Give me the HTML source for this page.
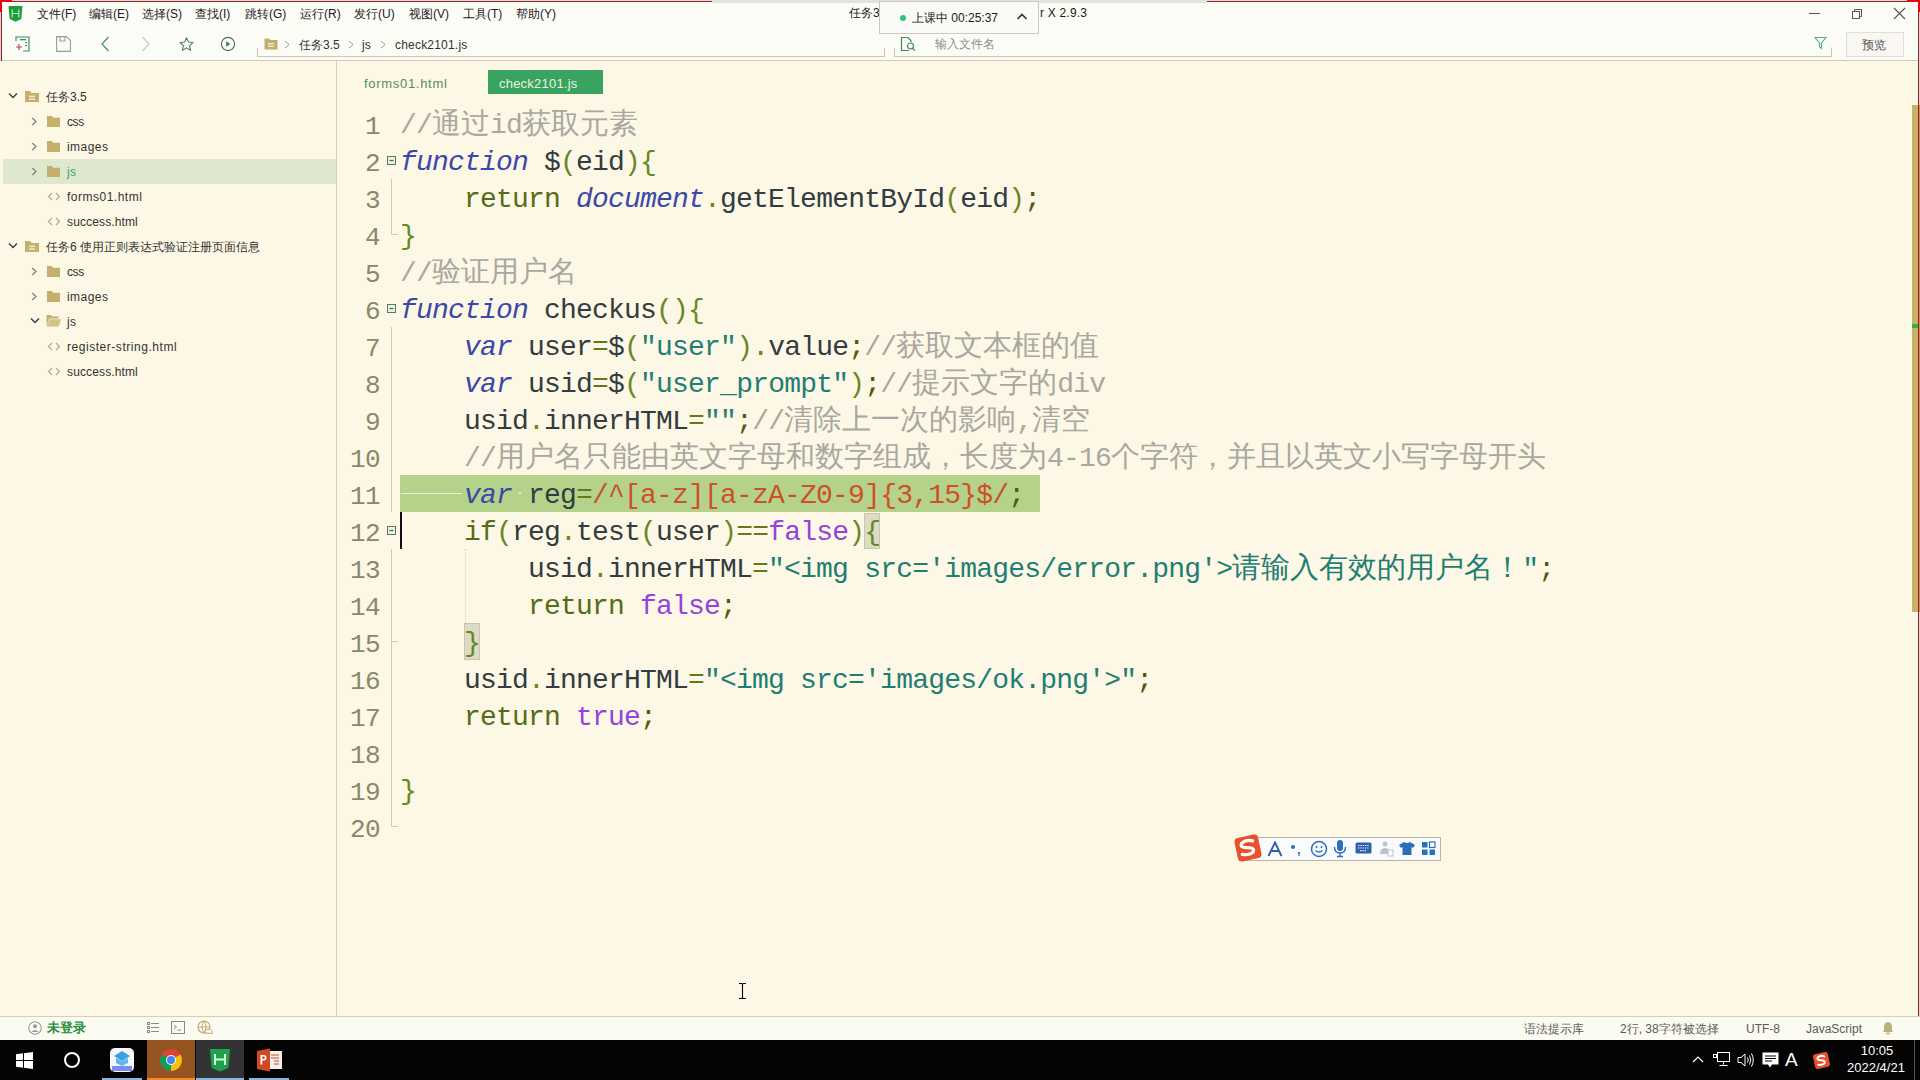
<!DOCTYPE html>
<html><head><meta charset="utf-8">
<style>
html,body{margin:0;padding:0}
body{width:1920px;height:1080px;overflow:hidden;position:relative;background:#FDF7E5;font-family:"Liberation Sans",sans-serif}
.abs{position:absolute}
#title{position:absolute;left:0;top:0;width:1920px;height:60px;background:#FCFCF7}
#tbline{position:absolute;left:0;top:60px;width:1920px;height:1px;background:#CFCBB5}
#side{position:absolute;left:0;top:61px;width:336px;height:955px;background:#FDF7E5}
#sep{position:absolute;left:336px;top:61px;width:1px;height:955px;background:#D9D3BD}
#status{position:absolute;left:0;top:1016px;width:1920px;height:24px;background:#FCFBF1;border-top:1px solid #D3CFBA;box-sizing:border-box}
#task{position:absolute;left:0;top:1040px;width:1920px;height:40px;background:#040404}
.mi{position:absolute;top:6px;font-size:12px;color:#1a1a1a;white-space:nowrap;line-height:17px}
.ln{position:absolute;left:330px;margin-top:4px;width:50px;text-align:right;height:37px;line-height:37px;font-family:"Liberation Mono",monospace;font-size:26px;letter-spacing:-0.6px;color:#8A876C}
.cl{position:absolute;left:400px;margin-top:2px;height:37px;line-height:37px;white-space:pre;font-family:"Liberation Mono",monospace;font-size:28px;letter-spacing:-0.8px;color:#333C40}
.cj{font-size:29px;letter-spacing:0;font-weight:300}
.cm{color:#A8A8A0}
.kw{color:#3B48A8;font-style:italic}
.rt{color:#556C18}
.id{color:#333C40}
.pu{color:#648A22}
.sc{color:#4E5A10}
.op{color:#667818}
.st{color:#1F7E74}
.bo{color:#9444DC}
.rx{color:#CC5028}
.br{color:#648A22}
.chev{position:absolute}
.ico{position:absolute}
.fico{position:absolute;font-size:12px;color:#A09A80;letter-spacing:1px;line-height:18px}
.tt{position:absolute;font-size:12px;line-height:25px;white-space:nowrap}
.sb{position:absolute;top:1021px;font-size:12px;color:#5A5A5A;line-height:16px;white-space:nowrap}
</style></head><body>
<div id="title"></div>
<div id="tbline"></div>
<!-- red window border -->
<div class="abs" style="left:0;top:0;width:1920px;height:1px;background:#F6CFCF"></div>
<div class="abs" style="left:0;top:1px;width:1920px;height:1px;background:#7A3030"></div>
<div class="abs" style="left:0;top:0;width:1px;height:1040px;background:#F6C8C8"></div>
<div class="abs" style="left:1px;top:0;width:1px;height:1040px;background:#7A2C2C"></div>
<div class="abs" style="left:1918px;top:0;width:1px;height:1040px;background:#74302C"></div>
<div class="abs" style="left:1919px;top:0;width:1px;height:1040px;background:#F6C8C8"></div>
<div class="abs" style="left:1919px;top:105px;width:1px;height:507px;background:#F0804A"></div>
<div class="abs" style="left:0;top:0;width:12px;height:2px;background:#F00010"></div>
<div class="abs" style="left:0;top:0;width:2px;height:12px;background:#F00010"></div>
<div class="abs" style="left:0;top:1029px;width:2px;height:11px;background:#F00010"></div>
<div class="abs" style="left:1907px;top:0;width:13px;height:2px;background:#F00010"></div>
<div class="abs" style="left:1918px;top:0;width:2px;height:12px;background:#F00010"></div>
<div class="abs" style="left:712px;top:0;width:495px;height:3px;background:#E4E2DC"></div>

<!-- logo -->
<svg class="abs" style="left:8px;top:6px" width="15" height="16" viewBox="0 0 15 16"><path d="M0.5 0 H14.5 L13.3 13 L7.5 15.8 L1.7 13 Z" fill="#1E9C3C"/><path d="M4.2 3.5 V11.5 M10.8 3.5 V11.5 M4.2 7.5 H10.8" stroke="#BFF5C8" stroke-width="1.1" fill="none"/></svg>
<div class="mi" style="left:37px">文件(F)</div>
<div class="mi" style="left:89px">编辑(E)</div>
<div class="mi" style="left:142px">选择(S)</div>
<div class="mi" style="left:195px">查找(I)</div>
<div class="mi" style="left:245px">跳转(G)</div>
<div class="mi" style="left:300px">运行(R)</div>
<div class="mi" style="left:354px">发行(U)</div>
<div class="mi" style="left:409px">视图(V)</div>
<div class="mi" style="left:463px">工具(T)</div>
<div class="mi" style="left:516px">帮助(Y)</div>

<!-- title center -->
<div class="abs" style="left:849px;top:5px;font-size:12px;color:#1a1a1a;line-height:17px">任务3</div>
<div class="abs" style="left:879px;top:1px;width:160px;height:33px;background:#FAFAF7;border:1px solid #C9C9C6;box-sizing:border-box"></div>
<div class="abs" style="left:900px;top:15px;width:6px;height:6px;border-radius:3px;background:#33C47A"></div>
<div class="abs" style="left:912px;top:10px;font-size:12px;color:#1a1a1a;line-height:16px">上课中 00:25:37</div>
<svg class="abs" style="left:1016px;top:12px" width="12" height="10" viewBox="0 0 12 10"><path d="M1.5 7 L6 2.5 L10.5 7" stroke="#333" stroke-width="1.6" fill="none"/></svg>
<div class="abs" style="left:1040px;top:5px;font-size:12px;letter-spacing:0.2px;color:#1a1a1a;line-height:17px">r X 2.9.3</div>

<!-- window controls -->
<div class="abs" style="left:1809px;top:13px;width:11px;height:1px;background:#555"></div>
<svg class="abs" style="left:1851px;top:8px" width="12" height="12" viewBox="0 0 12 12"><rect x="1.5" y="3.5" width="7" height="7" fill="none" stroke="#555"/><path d="M3.5 3.5 V1.5 H10.5 V8.5 H8.5" fill="none" stroke="#555"/></svg>
<svg class="abs" style="left:1893px;top:7px" width="13" height="13" viewBox="0 0 13 13"><path d="M1 1 L12 12 M12 1 L1 12" stroke="#555" stroke-width="1.1"/></svg>

<!-- toolbar icons -->
<svg class="abs" style="left:15px;top:36px" width="16" height="16" viewBox="0 0 16 16"><path d="M1 5 V1 H14 V15 H8" fill="none" stroke="#3C8C64" stroke-width="1.2"/><rect x="5" y="3" width="6" height="1.3" fill="#3C8C64"/><rect x="10" y="6" width="2" height="1.2" fill="#3C8C64"/><rect x="10" y="9" width="2" height="1.2" fill="#3C8C64"/><path d="M4 8 V14 M1 11 H7" stroke="#B0524A" stroke-width="1.2"/></svg>
<svg class="abs" style="left:56px;top:36px" width="15" height="16" viewBox="0 0 15 16"><path d="M0.6 0.6 H10.5 L14.4 4.5 V15.4 H0.6 Z" fill="none" stroke="#9A9A9A" stroke-width="1.1"/><path d="M4 0.6 V5 H9 V0.6" fill="none" stroke="#9A9A9A" stroke-width="1.1"/></svg>
<svg class="abs" style="left:100px;top:36px" width="10" height="16" viewBox="0 0 10 16"><path d="M8.5 1 L2 8 L8.5 15" fill="none" stroke="#4A8870" stroke-width="1.15"/></svg>
<svg class="abs" style="left:141px;top:36px" width="10" height="16" viewBox="0 0 10 16"><path d="M1.5 1 L8 8 L1.5 15" fill="none" stroke="#C4CCC4" stroke-width="1.15"/></svg>
<svg class="abs" style="left:179px;top:37px" width="16" height="15" viewBox="0 0 16 15"><path d="M7.5 0.8 L9.4 5 L14 5.5 L10.6 8.6 L11.6 13.3 L7.5 10.9 L3.4 13.3 L4.4 8.6 L1 5.5 L5.6 5 Z" fill="none" stroke="#52806C" stroke-width="1.1" stroke-linejoin="round"/></svg>
<svg class="abs" style="left:220px;top:36px" width="16" height="16" viewBox="0 0 16 16"><circle cx="8" cy="8" r="6.6" fill="none" stroke="#476E5E" stroke-width="1.1"/><path d="M6.2 5.3 L10.2 8 L6.2 10.7 Z" fill="#2F7A5A"/></svg>
<div class="abs" style="left:257px;top:48px;width:1px;height:9px;background:#CCC8B4"></div>
<div class="abs" style="left:257px;top:56px;width:628px;height:1px;background:#CCC8B4"></div><div class="abs" style="left:884px;top:48px;width:1px;height:9px;background:#CCC8B4"></div>
<svg class="abs" style="left:264px;top:38px" width="14" height="12" viewBox="0 0 14 12"><path d="M0.5 0.5 H5 L6.5 2 H13.5 V11.5 H0.5 Z" fill="#C2AE6E"/><rect x="4" y="5" width="6" height="1.3" fill="#F6EFD8"/><rect x="4" y="7.5" width="6" height="1.3" fill="#F6EFD8"/></svg>
<svg class="abs" style="left:284px;top:40px" width="6" height="9" viewBox="0 0 6 9"><path d="M1 1 L5 4.5 L1 8" fill="none" stroke="#999" stroke-width="1"/></svg>
<div class="abs" style="left:299px;top:37px;font-size:12px;color:#333;line-height:17px">任务3.5</div>
<svg class="abs" style="left:348px;top:40px" width="6" height="9" viewBox="0 0 6 9"><path d="M1 1 L5 4.5 L1 8" fill="none" stroke="#999" stroke-width="1"/></svg>
<div class="abs" style="left:362px;top:37px;font-size:12px;color:#333;line-height:17px">js</div>
<svg class="abs" style="left:380px;top:40px" width="6" height="9" viewBox="0 0 6 9"><path d="M1 1 L5 4.5 L1 8" fill="none" stroke="#999" stroke-width="1"/></svg>
<div class="abs" style="left:395px;top:37px;font-size:12px;letter-spacing:0.2px;color:#333;line-height:17px">check2101.js</div>
<div class="abs" style="left:894px;top:48px;width:1px;height:9px;background:#CCC8B4"></div>
<div class="abs" style="left:894px;top:56px;width:938px;height:1px;background:#CCC8B4"></div>
<div class="abs" style="left:1831px;top:48px;width:1px;height:9px;background:#CCC8B4"></div>
<svg class="abs" style="left:900px;top:36px" width="17" height="16" viewBox="0 0 17 16"><path d="M9 14.5 H1.5 V1.5 H8 L11 4.5 V6" fill="none" stroke="#3A8A60" stroke-width="1.2"/><circle cx="10.5" cy="10" r="3" fill="none" stroke="#3A8A60" stroke-width="1.2"/><path d="M12.6 12.2 L15 14.6" stroke="#3A8A60" stroke-width="1.3"/></svg>
<div class="abs" style="left:935px;top:36px;font-size:12px;color:#8C8C8C;line-height:17px">输入文件名</div>
<svg class="abs" style="left:1814px;top:36px" width="13" height="14" viewBox="0 0 13 14"><path d="M1 1.5 H12 L7.5 7 V12.5 L5.5 11 V7 Z" fill="none" stroke="#5AAE8A" stroke-width="1.1"/></svg>
<div class="abs" style="left:1846px;top:32px;width:58px;height:25px;border:1px solid #E0DED6;background:#F8F7F2;box-sizing:border-box"></div>
<div class="abs" style="left:1862px;top:37px;font-size:12px;color:#555;line-height:16px">预览</div>

<div id="side"></div>
<div id="sep"></div>
<svg class="chev" style="left:8px;top:92px" width="10" height="8" viewBox="0 0 10 8"><path d="M1 1.5 L5 5.5 L9 1.5" fill="none" stroke="#3f3f3f" stroke-width="1.5"/></svg>
<svg class="ico" style="left:25px;top:91px" width="14" height="12" viewBox="0 0 14 12"><path d="M0 0 H5 L6.5 2 H14 V11 H0 Z" fill="#C4AF6C"/><rect x="4" y="4.6" width="6" height="1.5" fill="#F4ECD0"/><rect x="4" y="7.4" width="6" height="1.5" fill="#F4ECD0"/></svg>
<div class="tt" style="left:46px;top:85px;color:#333;letter-spacing:0px">任务3.5</div>
<svg class="chev" style="left:31px;top:117px" width="7" height="9" viewBox="0 0 7 9"><path d="M1.3 1 L5 4.5 L1.3 8" fill="none" stroke="#808076" stroke-width="1.25"/></svg>
<svg class="ico" style="left:47px;top:116px" width="13" height="11" viewBox="0 0 13 11"><path d="M0 0 H5 L6 1.8 H13 V11 H0 Z" fill="#C4AF6C"/></svg>
<div class="tt" style="left:67px;top:110px;color:#333;letter-spacing:-0.4px">css</div>
<svg class="chev" style="left:31px;top:142px" width="7" height="9" viewBox="0 0 7 9"><path d="M1.3 1 L5 4.5 L1.3 8" fill="none" stroke="#808076" stroke-width="1.25"/></svg>
<svg class="ico" style="left:47px;top:141px" width="13" height="11" viewBox="0 0 13 11"><path d="M0 0 H5 L6 1.8 H13 V11 H0 Z" fill="#C4AF6C"/></svg>
<div class="tt" style="left:67px;top:135px;color:#333;letter-spacing:0.45px">images</div>
<div style="position:absolute;left:3px;top:159px;width:333px;height:25px;background:#DEE8CE"></div>
<svg class="chev" style="left:31px;top:167px" width="7" height="9" viewBox="0 0 7 9"><path d="M1.3 1 L5 4.5 L1.3 8" fill="none" stroke="#808076" stroke-width="1.25"/></svg>
<svg class="ico" style="left:47px;top:166px" width="13" height="11" viewBox="0 0 13 11"><path d="M0 0 H5 L6 1.8 H13 V11 H0 Z" fill="#C4AF6C"/></svg>
<div class="tt" style="left:67px;top:160px;color:#3AA56A;letter-spacing:0.3px">js</div>
<svg class="ico" style="left:47px;top:192px" width="14" height="9" viewBox="0 0 14 9"><path d="M5 1 L1.5 4.5 L5 8 M9 1 L12.5 4.5 L9 8" fill="none" stroke="#B3AC90" stroke-width="1.3"/></svg>
<div class="tt" style="left:67px;top:185px;color:#333;letter-spacing:0.5px">forms01.html</div>
<svg class="ico" style="left:47px;top:217px" width="14" height="9" viewBox="0 0 14 9"><path d="M5 1 L1.5 4.5 L5 8 M9 1 L12.5 4.5 L9 8" fill="none" stroke="#B3AC90" stroke-width="1.3"/></svg>
<div class="tt" style="left:67px;top:210px;color:#333;letter-spacing:0.13px">success.html</div>
<svg class="chev" style="left:8px;top:242px" width="10" height="8" viewBox="0 0 10 8"><path d="M1 1.5 L5 5.5 L9 1.5" fill="none" stroke="#3f3f3f" stroke-width="1.5"/></svg>
<svg class="ico" style="left:25px;top:241px" width="14" height="12" viewBox="0 0 14 12"><path d="M0 0 H5 L6.5 2 H14 V11 H0 Z" fill="#C4AF6C"/><rect x="4" y="4.6" width="6" height="1.5" fill="#F4ECD0"/><rect x="4" y="7.4" width="6" height="1.5" fill="#F4ECD0"/></svg>
<div class="tt" style="left:46px;top:235px;color:#333;letter-spacing:0px">任务6 使用正则表达式验证注册页面信息</div>
<svg class="chev" style="left:31px;top:267px" width="7" height="9" viewBox="0 0 7 9"><path d="M1.3 1 L5 4.5 L1.3 8" fill="none" stroke="#808076" stroke-width="1.25"/></svg>
<svg class="ico" style="left:47px;top:266px" width="13" height="11" viewBox="0 0 13 11"><path d="M0 0 H5 L6 1.8 H13 V11 H0 Z" fill="#C4AF6C"/></svg>
<div class="tt" style="left:67px;top:260px;color:#333;letter-spacing:-0.4px">css</div>
<svg class="chev" style="left:31px;top:292px" width="7" height="9" viewBox="0 0 7 9"><path d="M1.3 1 L5 4.5 L1.3 8" fill="none" stroke="#808076" stroke-width="1.25"/></svg>
<svg class="ico" style="left:47px;top:291px" width="13" height="11" viewBox="0 0 13 11"><path d="M0 0 H5 L6 1.8 H13 V11 H0 Z" fill="#C4AF6C"/></svg>
<div class="tt" style="left:67px;top:285px;color:#333;letter-spacing:0.45px">images</div>
<svg class="chev" style="left:30px;top:317px" width="10" height="8" viewBox="0 0 10 8"><path d="M1 1.5 L5 5.5 L9 1.5" fill="none" stroke="#3f3f3f" stroke-width="1.5"/></svg>
<svg class="ico" style="left:46px;top:315px" width="15" height="12" viewBox="0 0 15 12"><path d="M0.5 0 H5 L6 1.6 H12.5 V3.5 H3 L0.5 11 Z" fill="#C4AF6C"/><path d="M3.2 4.2 H15 L12.6 11.5 H0.6 Z" fill="#D3C28A"/></svg>
<div class="tt" style="left:67px;top:310px;color:#333;letter-spacing:0.3px">js</div>
<svg class="ico" style="left:47px;top:342px" width="14" height="9" viewBox="0 0 14 9"><path d="M5 1 L1.5 4.5 L5 8 M9 1 L12.5 4.5 L9 8" fill="none" stroke="#B3AC90" stroke-width="1.3"/></svg>
<div class="tt" style="left:67px;top:335px;color:#333;letter-spacing:0.54px">register-string.html</div>
<svg class="ico" style="left:47px;top:367px" width="14" height="9" viewBox="0 0 14 9"><path d="M5 1 L1.5 4.5 L5 8 M9 1 L12.5 4.5 L9 8" fill="none" stroke="#B3AC90" stroke-width="1.3"/></svg>
<div class="tt" style="left:67px;top:360px;color:#333;letter-spacing:0.13px">success.html</div>

<!-- tabs -->
<div class="abs" style="left:364px;top:75px;font-size:13px;letter-spacing:0.7px;color:#5A8C64;line-height:18px">forms01.html</div>
<div class="abs" style="left:488px;top:70px;width:115px;height:24px;background:#3AA35F"></div>
<div class="abs" style="left:499px;top:75px;font-size:13px;letter-spacing:0.22px;color:#E2F7E0;line-height:18px">check2101.js</div>

<!-- bracket match boxes -->
<div class="abs" style="left:864px;top:513px;width:16px;height:36px;background:#DDDBC6;box-shadow:inset 0 0 0 1px #C9C6B0"></div>
<div class="abs" style="left:464px;top:623px;width:16px;height:37px;background:#DDDBC6;box-shadow:inset 0 0 0 1px #C9C6B0"></div>
<!-- line highlight -->
<div class="abs" style="left:400px;top:475px;width:640px;height:37px;background:#B5D28A"></div>
<div class="abs" style="left:401px;top:493px;width:61px;height:1px;background:#E6F2D2"></div><div class="abs" style="left:519px;top:492px;width:2px;height:2px;background:#E6F2D2"></div>

<!-- gutter fold marks and guides -->
<svg class="abs" style="left:380px;top:100px" width="30" height="900" viewBox="0 0 30 900">
 <g stroke="#CFCAB6" stroke-width="1" fill="none">
  <path d="M11.5 79 V134.5 H18"/>
  <path d="M11.5 227 V412"/>
  <path d="M11.5 449 V726.5 H18"/>
  <path d="M11.5 541.5 H18"/>
 </g>
 <g fill="#E6F4E2" stroke="#5F735F" stroke-width="1">
  <rect x="7.5" y="56.5" width="8" height="8"/>
  <rect x="7.5" y="204.5" width="8" height="8"/>
  <rect x="7.5" y="426.5" width="8" height="8"/>
 </g>
 <g stroke="#4F634F" stroke-width="1.2">
  <path d="M9.5 60.5 H13.5"/><path d="M9.5 208.5 H13.5"/><path d="M9.5 430.5 H13.5"/>
 </g>
</svg>
<div class="abs" style="left:465px;top:549px;width:0;height:74px;border-left:1px dotted #D8D2BC"></div>
<div class="abs" style="left:400px;top:512px;width:2px;height:37px;background:#111"></div>

<div class="ln" style="top:105px">1</div>
<div class="cl" style="top:105px"><span class="cm">//<span class="cj">通过</span>id<span class="cj">获取元素</span></span></div>
<div class="ln" style="top:142px">2</div>
<div class="cl" style="top:142px"><span class="kw">function</span> <span class="id">$</span><span class="pu">(</span><span class="id">eid</span><span class="pu">)</span><span class="pu">{</span></div>
<div class="ln" style="top:179px">3</div>
<div class="cl" style="top:179px">    <span class="rt">return</span> <span class="kw">document</span><span class="pu">.</span><span class="id">getElementById</span><span class="pu">(</span><span class="id">eid</span><span class="pu">)</span><span class="sc">;</span></div>
<div class="ln" style="top:216px">4</div>
<div class="cl" style="top:216px"><span class="pu">}</span></div>
<div class="ln" style="top:253px">5</div>
<div class="cl" style="top:253px"><span class="cm">//<span class="cj">验证用户名</span></span></div>
<div class="ln" style="top:290px">6</div>
<div class="cl" style="top:290px"><span class="kw">function</span> <span class="id">checkus</span><span class="pu">(</span><span class="pu">)</span><span class="pu">{</span></div>
<div class="ln" style="top:327px">7</div>
<div class="cl" style="top:327px">    <span class="kw">var</span> <span class="id">user</span><span class="op">=</span><span class="id">$</span><span class="pu">(</span><span class="st">"user"</span><span class="pu">)</span><span class="pu">.</span><span class="id">value</span><span class="sc">;</span><span class="cm">//<span class="cj">获取文本框的值</span></span></div>
<div class="ln" style="top:364px">8</div>
<div class="cl" style="top:364px">    <span class="kw">var</span> <span class="id">usid</span><span class="op">=</span><span class="id">$</span><span class="pu">(</span><span class="st">"user_prompt"</span><span class="pu">)</span><span class="sc">;</span><span class="cm">//<span class="cj">提示文字的</span>div</span></div>
<div class="ln" style="top:401px">9</div>
<div class="cl" style="top:401px">    <span class="id">usid</span><span class="pu">.</span><span class="id">innerHTML</span><span class="op">=</span><span class="st">""</span><span class="sc">;</span><span class="cm">//<span class="cj">清除上一次的影响</span>,<span class="cj">清空</span></span></div>
<div class="ln" style="top:438px">10</div>
<div class="cl" style="top:438px">    <span class="cm">//<span class="cj">用户名只能由英文字母和数字组成，长度为</span>4-16<span class="cj">个字符，并且以英文小写字母开头</span></span></div>
<div class="ln" style="top:475px">11</div>
<div class="cl" style="top:475px">    <span class="kw">var</span> <span class="id">reg</span><span class="op">=</span><span class="rx">/^[a-z][a-zA-Z0-9]{3,15}$/</span><span class="sc">;</span></div>
<div class="ln" style="top:512px">12</div>
<div class="cl" style="top:512px">    <span class="rt">if</span><span class="pu">(</span><span class="id">reg</span><span class="pu">.</span><span class="id">test</span><span class="pu">(</span><span class="id">user</span><span class="pu">)</span><span class="op">==</span><span class="bo">false</span><span class="pu">)</span><span class="br">{</span></div>
<div class="ln" style="top:549px">13</div>
<div class="cl" style="top:549px">        <span class="id">usid</span><span class="pu">.</span><span class="id">innerHTML</span><span class="op">=</span><span class="st">"&lt;img src='images/error.png'&gt;<span class="cj">请输入有效的用户名！</span>"</span><span class="sc">;</span></div>
<div class="ln" style="top:586px">14</div>
<div class="cl" style="top:586px">        <span class="rt">return</span> <span class="bo">false</span><span class="sc">;</span></div>
<div class="ln" style="top:623px">15</div>
<div class="cl" style="top:623px">    <span class="br">}</span></div>
<div class="ln" style="top:660px">16</div>
<div class="cl" style="top:660px">    <span class="id">usid</span><span class="pu">.</span><span class="id">innerHTML</span><span class="op">=</span><span class="st">"&lt;img src='images/ok.png'&gt;"</span><span class="sc">;</span></div>
<div class="ln" style="top:697px">17</div>
<div class="cl" style="top:697px">    <span class="rt">return</span> <span class="bo">true</span><span class="sc">;</span></div>
<div class="ln" style="top:734px">18</div>
<div class="cl" style="top:734px"></div>
<div class="ln" style="top:771px">19</div>
<div class="cl" style="top:771px"><span class="pu">}</span></div>
<div class="ln" style="top:808px">20</div>
<div class="cl" style="top:808px"></div>

<!-- scrollbar -->
<div class="abs" style="left:1912px;top:105px;width:6px;height:507px;background:#C7B26A"></div>
<div class="abs" style="left:1912px;top:324px;width:6px;height:4px;background:#2EB04A"></div>

<!-- sogou IME bar -->
<div class="abs" style="left:1245px;top:837px;width:196px;height:24px;background:#FAFBFC;border:1px solid #B8B4A8;box-sizing:border-box"></div>
<svg class="abs" style="left:1233px;top:833px" width="30" height="30" viewBox="0 0 30 30"><g transform="rotate(-12 15 15)"><rect x="3" y="3" width="24" height="24" rx="4" fill="#E8502A"/><path d="M21 9 C16 6 8 8 9 12 C10 15 20 14 20 18 C20 22 12 22 8 20" fill="none" stroke="#fff" stroke-width="3.2" stroke-linecap="round"/></g></svg>
<svg class="abs" style="left:1267px;top:841px" width="16" height="16" viewBox="0 0 16 16"><path d="M1.5 15 L8 1.5 L14.5 15 M4 10 H12" fill="none" stroke="#2B62A8" stroke-width="1.9"/></svg>
<div class="abs" style="left:1291px;top:845px;width:4px;height:4px;border-radius:2px;background:#2A6FB8"></div>
<div class="abs" style="left:1297px;top:843px;font-size:13px;color:#2A6FB8;font-weight:bold;line-height:14px">,</div>
<svg class="abs" style="left:1310px;top:840px" width="18" height="18" viewBox="0 0 18 18"><circle cx="9" cy="9" r="7.5" fill="none" stroke="#2A6FB8" stroke-width="1.5"/><circle cx="6.5" cy="7" r="1" fill="#2A6FB8"/><circle cx="11.5" cy="7" r="1" fill="#2A6FB8"/><path d="M5.5 10.5 Q9 13.5 12.5 10.5" fill="none" stroke="#2A6FB8" stroke-width="1.3"/></svg>
<svg class="abs" style="left:1333px;top:839px" width="14" height="19" viewBox="0 0 14 19"><rect x="4" y="1" width="6" height="11" rx="3" fill="#2A6FB8"/><path d="M1.5 8 Q1.5 14 7 14 Q12.5 14 12.5 8" fill="none" stroke="#2A6FB8" stroke-width="1.4"/><path d="M7 14 V17.5 M4 17.5 H10" stroke="#2A6FB8" stroke-width="1.4"/></svg>
<svg class="abs" style="left:1355px;top:842px" width="17" height="12" viewBox="0 0 17 12"><rect x="0.5" y="0.5" width="16" height="11" rx="1.5" fill="#2B62A8"/><path d="M3 3.5 H14 M3 6 H14 M5 8.6 H12" stroke="#E8F0FA" stroke-width="1.2" stroke-dasharray="1.4 0.9"/></svg>
<svg class="abs" style="left:1378px;top:840px" width="16" height="17" viewBox="0 0 16 17"><circle cx="7" cy="4" r="2.5" fill="#B8C4D0"/><path d="M2 14 Q2 8 7 8 Q12 8 12 14 Z" fill="#B8C4D0"/><rect x="10" y="10" width="5" height="6" fill="#fff" stroke="#B8C4D0"/></svg>
<svg class="abs" style="left:1398px;top:841px" width="18" height="15" viewBox="0 0 18 15"><path d="M6 1 L1 4 L3 7 L4.5 6 V14 H13.5 V6 L15 7 L17 4 L12 1 Q9 3 6 1 Z" fill="#2A6FB8"/></svg>
<svg class="abs" style="left:1421px;top:841px" width="15" height="15" viewBox="0 0 15 15"><rect x="1" y="1" width="5.5" height="5.5" fill="#2A6FB8"/><rect x="8.5" y="1" width="5.5" height="5.5" fill="#fff" stroke="#2A6FB8" stroke-width="1.2"/><rect x="1" y="8.5" width="5.5" height="5.5" fill="#2A6FB8"/><rect x="8.5" y="8.5" width="5.5" height="5.5" fill="#2A6FB8"/></svg>

<!-- mouse I-beam -->
<svg class="abs" style="left:738px;top:982px" width="10" height="18" viewBox="0 0 10 18"><path d="M1 1.5 H3.5 Q4.5 1.5 4.5 2.8 V15.2 Q4.5 16.5 3.5 16.5 H1 M8 1.5 H5.5 Q4.5 1.5 4.5 2.8 M4.5 15.2 Q4.5 16.5 5.5 16.5 H8" stroke="#000" stroke-width="1.1" fill="none"/></svg>

<!-- status bar -->
<div id="status"></div>
<svg class="abs" style="left:28px;top:1021px" width="14" height="14" viewBox="0 0 14 14"><circle cx="7" cy="7" r="6.3" fill="none" stroke="#999" stroke-width="1.1"/><circle cx="7" cy="5.2" r="2" fill="#999"/><path d="M3.5 11 Q7 7 10.5 11" fill="#999"/></svg>
<div class="abs" style="left:47px;top:1020px;font-size:13px;font-weight:bold;color:#23913E;line-height:16px">未登录</div>
<svg class="abs" style="left:146px;top:1021px" width="14" height="14" viewBox="0 0 14 14"><g fill="none" stroke="#8A8A80" stroke-width="1"><rect x="1.5" y="1.5" width="2" height="2"/><rect x="1.5" y="5.5" width="2" height="2"/><rect x="1.5" y="9.5" width="2" height="2"/><path d="M5 2.5 H13 M5 6.5 H13 M5 10.5 H13"/></g></svg>
<svg class="abs" style="left:171px;top:1021px" width="14" height="13" viewBox="0 0 14 13"><rect x="0.5" y="0.5" width="13" height="12" fill="none" stroke="#888"/><path d="M3 4 L5.5 6 L3 8 M6.5 9 H10" fill="none" stroke="#888"/></svg>
<svg class="abs" style="left:197px;top:1020px" width="16" height="15" viewBox="0 0 16 15"><circle cx="7" cy="7" r="6" fill="none" stroke="#C0A870" stroke-width="1.1"/><path d="M1 7 H13 M7 1 Q3 7 7 13 M7 1 Q11 7 7 13" fill="none" stroke="#C0A870"/><path d="M8 13 Q8 9 11 9.5 Q13 8 14.5 10.5 Q16 11.5 15 13.5 Z" fill="#FCFBF1" stroke="#C0A870"/></svg>
<div class="sb" style="left:1524px">语法提示库</div>
<div class="sb" style="left:1620px">2行, 38字符被选择</div>
<div class="sb" style="left:1746px">UTF-8</div>
<div class="sb" style="left:1806px">JavaScript</div>
<svg class="abs" style="left:1881px;top:1021px" width="14" height="14" viewBox="0 0 14 14"><path d="M7 1 Q11 1.5 11 6 V9.5 L12.5 11 H1.5 L3 9.5 V6 Q3 1.5 7 1 Z" fill="#B8B080"/><rect x="5.5" y="11.5" width="3" height="2" fill="#B8B080"/></svg>

<!-- taskbar -->
<div id="task"></div>
<svg class="abs" style="left:16px;top:1052px" width="17" height="17" viewBox="0 0 17 17"><path d="M0 2.3 L7 1.3 V8 H0 Z M8 1.2 L17 0 V8 H8 Z M0 9 H7 V15.7 L0 14.7 Z M8 9 H17 V17 L8 15.8 Z" fill="#fff"/></svg>
<div class="abs" style="left:64px;top:1052px;width:12px;height:12px;border:2px solid #fff;border-radius:8px"></div>
<svg class="abs" style="left:109px;top:1047px" width="26" height="26" viewBox="0 0 26 26"><rect x="1" y="1" width="24" height="24" rx="5" fill="#F4F8FC"/><path d="M5 9 L13 4 L21 9 L13 14 Z" fill="#3AA0E0"/><path d="M7 11 V16 L13 19 L19 16 V11 L13 14 Z" fill="#5BB8F0"/><rect x="3" y="19" width="20" height="5" fill="#7C8CE8"/></svg>
<div class="abs" style="left:102px;top:1078px;width:40px;height:2px;background:#8CB4DC"></div>
<div class="abs" style="left:147px;top:1040px;width:48px;height:40px;background:#965520"></div>
<div class="abs" style="left:147px;top:1078px;width:48px;height:2px;background:#F28A28"></div>
<svg class="abs" style="left:159px;top:1048px" width="24" height="24" viewBox="0 0 24 24"><circle cx="12" cy="12" r="11" fill="#DB4437"/><path d="M12 12 L21.5 6.5 A11 11 0 0 1 12 23 Z" fill="#F4C20D"/><path d="M12 12 L12 23 A11 11 0 0 1 2.5 6.5 Z" fill="#0F9D58"/><circle cx="12" cy="12" r="5" fill="#fff"/><circle cx="12" cy="12" r="4" fill="#4285F4"/></svg>
<div class="abs" style="left:196px;top:1040px;width:48px;height:40px;background:#333335"></div>
<div class="abs" style="left:196px;top:1078px;width:48px;height:2px;background:#8CB4DC"></div>
<svg class="abs" style="left:209px;top:1048px" width="22" height="24" viewBox="0 0 22 24"><path d="M1 1 H21 L19.5 20 L11 23.5 L2.5 20 Z" fill="#1FA04A"/><path d="M6 6 V17 M16 6 V17 M6 11.5 H16" stroke="#D8FFD8" stroke-width="2" fill="none"/></svg>
<svg class="abs" style="left:256px;top:1048px" width="28" height="24" viewBox="0 0 28 24"><rect x="10" y="3" width="16" height="18" fill="#F3F0EC"/><path d="M15 7 H23 M15 10 H23 M18 13 H23 M18 16 H23" stroke="#D04A2A" stroke-width="1.2"/><path d="M1 3 L14 0.5 V23.5 L1 21 Z" fill="#D24726"/><path d="M4.5 7 H8 Q10.5 7 10.5 9.8 Q10.5 12.5 8 12.5 H6.3 V16.5 H4.5 Z M6.3 8.6 V11 H7.8 Q8.8 11 8.8 9.8 Q8.8 8.6 7.8 8.6 Z" fill="#fff"/></svg>
<div class="abs" style="left:249px;top:1078px;width:40px;height:2px;background:#8CB4DC"></div>

<!-- tray -->
<svg class="abs" style="left:1692px;top:1055px" width="12" height="8" viewBox="0 0 12 8"><path d="M1 7 L6 2 L11 7" stroke="#fff" stroke-width="1.2" fill="none"/></svg>
<svg class="abs" style="left:1713px;top:1052px" width="17" height="15" viewBox="0 0 17 15"><rect x="4.5" y="0.5" width="12" height="9" fill="none" stroke="#fff"/><path d="M10.5 9.5 V12.5 M6.5 13.5 H14.5" stroke="#fff"/><rect x="0.5" y="2.5" width="3" height="3" fill="#000" stroke="#fff"/></svg>
<svg class="abs" style="left:1737px;top:1052px" width="17" height="16" viewBox="0 0 17 16"><path d="M1 5.5 H4 L8 2 V14 L4 10.5 H1 Z" fill="none" stroke="#fff"/><path d="M10.5 5.5 Q12 8 10.5 10.5 M12.5 3.5 Q15 8 12.5 12.5 M14.5 1.5 Q18 8 14.5 14.5" fill="none" stroke="#fff"/></svg>
<svg class="abs" style="left:1762px;top:1052px" width="17" height="17" viewBox="0 0 17 17"><path d="M0.5 0.5 H16.5 V12.5 H10 L8 15.5 L6 12.5 H0.5 Z" fill="#fff"/><path d="M3 4 H14 M3 6.5 H14 M3 9 H10" stroke="#000" stroke-width="1"/></svg>
<div class="abs" style="left:1785px;top:1049px;font-size:19px;color:#fff;line-height:22px">A</div>
<svg class="abs" style="left:1812px;top:1051px" width="19" height="19" viewBox="0 0 19 19"><g transform="rotate(-12 9.5 9.5)"><rect x="2" y="2" width="15" height="15" rx="2.5" fill="#E8502A"/><path d="M13 6 C10 4 5.5 5 6 7.5 C6.5 9.5 12.5 9 12.5 11.5 C12.5 14 8 14 5.5 13" fill="none" stroke="#fff" stroke-width="2" stroke-linecap="round"/></g></svg>
<div class="abs" style="left:1850px;top:1043px;width:54px;text-align:center;font-size:13px;color:#fff;line-height:16px">10:05</div>
<div class="abs" style="left:1843px;top:1060px;width:66px;text-align:center;font-size:13px;color:#fff;line-height:16px">2022/4/21</div>
<div class="abs" style="left:1914px;top:1040px;width:1px;height:40px;background:#555"></div>
</body></html>
